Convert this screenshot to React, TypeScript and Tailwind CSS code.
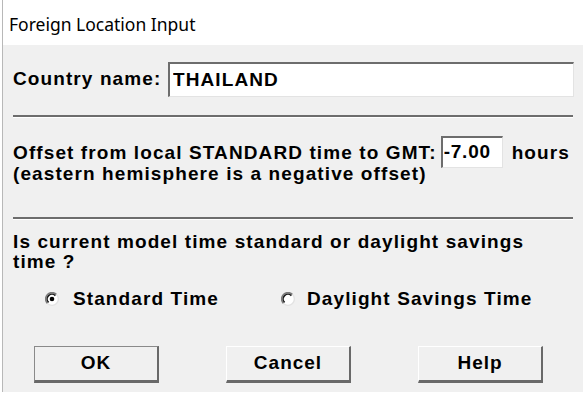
import React, { useState } from "react";

const Radio = ({ checked }: { checked: boolean }) => (
  <svg width="14" height="14" viewBox="0 0 14 14" className="shrink-0">
    <circle cx="7" cy="7" r="6.3" fill="#ffffff" />
    <path d="M 11.5 2.5 A 6.3 6.3 0 0 0 2.5 11.5" fill="none" stroke="#7a7a7a" strokeWidth="1.6" />
    <path d="M 10.4 3.6 A 4.8 4.8 0 0 0 3.6 10.4" fill="none" stroke="#1a1a1a" strokeWidth="1.5" />
    <path d="M 2.5 11.5 A 6.3 6.3 0 0 0 11.5 2.5" fill="none" stroke="#e3e3e3" strokeWidth="1.4" />
    {checked && <circle cx="7" cy="7" r="2.3" fill="#000000" />}
  </svg>
);

const Separator = () => (
  <div className="mx-[10px] border-t-2 border-b border-t-[#6d6d6d] border-b-[#ffffff]" />
);

const DlgButton = ({ label, isDefault }: { label: string; isDefault?: boolean }) => (
  <button
    className={
      "w-[125px] h-[37px] bg-[#f0f0f0] text-[19px] font-bold tracking-[1px] text-black border-l border-t border-r-2 border-b-[3px] border-r-[#696969] border-b-[#696969] " +
      (isDefault ? "border-l-[#8a8a8a] border-t-[#8a8a8a]" : "border-l-[#ffffff] border-t-[#ffffff]")
    }
  >
    {label}
  </button>
);

const App: React.FC = () => {
  const [useDaylight, setUseDaylight] = useState(false);

  return (
    <div
      className="w-[587px] h-[405px] bg-white text-black"
      style={{ fontFamily: '"Liberation Sans", Arial, sans-serif' }}
    >
      <div
        className="h-[45px] flex items-center pl-[6px] pt-[4px] text-[17.5px] border-l border-[#b8b8b8] ml-[2px]"
        style={{ fontFamily: '"Noto Sans", "Open Sans", sans-serif' }}
      >
        Foreign Location Input
      </div>
      <div className="ml-[2px] w-[581px] h-[347px] bg-[#f0f0f0] border-l border-[#b8b8b8] text-[19px] font-bold tracking-[1.1px]">
        <div className="flex items-center pl-[10px] pr-[8px] pt-[17px] pb-[18px]">
          <span className="w-[155px]">Country name:</span>
          <input
            className="w-[406px] h-[35px] bg-white pl-[3px] text-[19px] font-bold tracking-[1.1px] outline-none border-l-2 border-t-2 border-r border-b border-l-[#6d6d6d] border-t-[#6d6d6d] border-r-[#e3e3e3] border-b-[#e3e3e3]"
            defaultValue="THAILAND"
          />
        </div>
        <Separator />
        <div className="pl-[10px] pr-[4px] pt-[24px] pb-[33px] leading-[21px]">
          <div className="flex items-center h-[21px]">
            <span>Offset from local STANDARD time to GMT:</span>
            <input
              className="ml-[4px] mt-[-2px] w-[62px] h-[32px] bg-white pl-[1px] text-[19px] font-bold tracking-[0.8px] outline-none border-l-2 border-t-2 border-r border-b border-l-[#6d6d6d] border-t-[#6d6d6d] border-r-[#e3e3e3] border-b-[#e3e3e3]"
              defaultValue="-7.00"
            />
            <span className="ml-[9px]">hours</span>
          </div>
          <div>(eastern hemisphere is a negative offset)</div>
        </div>
        <Separator />
        <div className="pl-[10px] pt-[12px] leading-[20px]">
          Is current model time standard or daylight savings
          <br />
          time ?
        </div>
        <div className="flex items-center pt-[17px] leading-[20px]">
          <label className="flex items-center gap-[14px] pl-[42px] w-[278px]" onClick={() => setUseDaylight(false)}>
            <Radio checked={!useDaylight} />
            <span>Standard Time</span>
          </label>
          <label className="flex items-center gap-[12px]" onClick={() => setUseDaylight(true)}>
            <Radio checked={useDaylight} />
            <span>Daylight Savings Time</span>
          </label>
        </div>
        <div className="flex pl-[31px] pt-[37px] gap-[67px]">
          <DlgButton label="OK" isDefault />
          <DlgButton label="Cancel" />
          <DlgButton label="Help" />
        </div>
      </div>
    </div>
  );
};

export default App;
